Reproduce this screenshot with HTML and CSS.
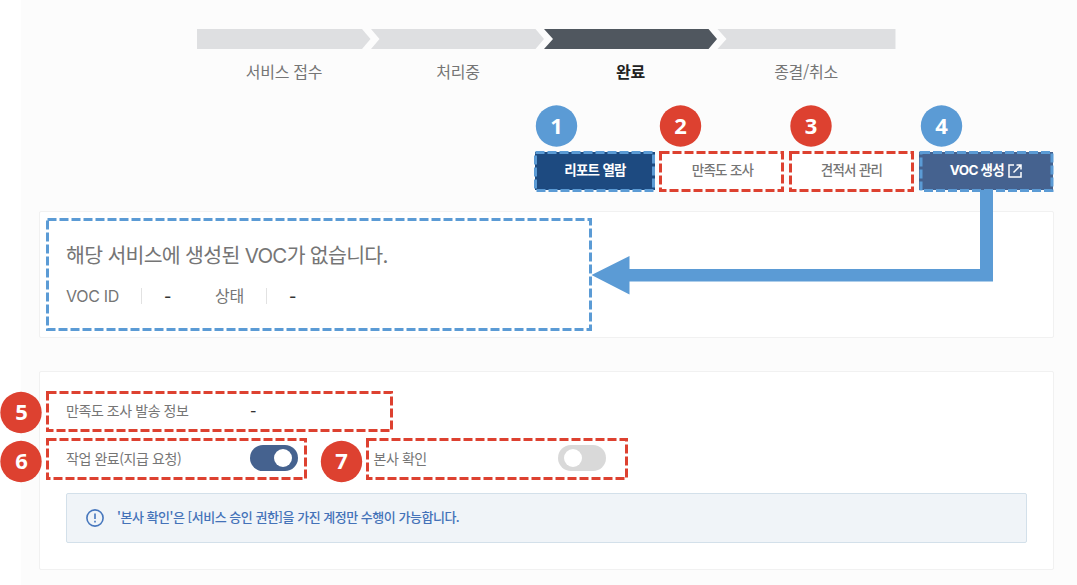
FILE: index.html
```
<!DOCTYPE html>
<html lang="ko">
<head>
<meta charset="utf-8">
<title>서비스 상세</title>
<link rel="stylesheet" href="styles.css">
</head>
<body>
<main class="page">
  <section class="progress">
    <svg class="progress-bar" viewBox="0 0 699 20" width="699" height="20">
      <path class="todo" d="M0 0H165L173.500 10L165 20H0Z"/>
      <path class="todo" d="M174 0H338.500L347 10L338.500 20H174L182.500 10Z"/>
      <path class="active" d="M347 0H511.500L520 10L511.500 20H347L356 10Z"/>
      <path class="todo" d="M520.500 0H698.500V20H520.500L529.500 10Z"/>
    </svg>
    <div class="steps">
      <span class="step">서비스 접수</span>
      <span class="step">처리중</span>
      <span class="step current">완료</span>
      <span class="step">종결/취소</span>
    </div>
  </section>

  <nav class="actions">
    <button class="btn primary">리포트 열람</button>
    <button class="btn">만족도 조사</button>
    <button class="btn">견적서 관리</button>
    <button class="btn voc">VOC 생성
      <svg width="14" height="14" viewBox="0 0 14 14"><path d="M6 1H1V13H13V8M8.500 1H13V5.500M13 1L5.500 8.500"/></svg>
    </button>
  </nav>

  <section class="card summary">
    <h1 class="title">해당 서비스에 생성된 VOC가 없습니다.</h1>
    <div class="meta">
      <span class="meta-label id">VOC ID</span><span class="meta-value">-</span>
      <span class="meta-label state">상태</span><span class="meta-value">-</span>
    </div>
  </section>

  <section class="card detail">
    <div class="row">
      <span class="label">만족도 조사 발송 정보</span><span class="value">-</span>
    </div>
    <div class="row">
      <span class="label request">작업 완료(지급 요청)</span><span class="toggle on"></span>
      <span class="label head">본사 확인</span><span class="toggle"></span>
    </div>
    <div class="notice">
      <svg width="18" height="18" viewBox="0 0 18 18"><circle cx="9" cy="9" r="8.100"/><path d="M9 4.500V10M9 11.800V13.500"/></svg>
      <span>'본사 확인'은 [서비스 승인 권한]을 가진 계정만 수행이 가능합니다.</span>
    </div>
  </section>

  <svg class="annotations" viewBox="0 0 1077 585" width="1077" height="585">
    <g class="frame blue">
      <rect x="535.500" y="152.500" width="118" height="38"/>
      <rect x="921" y="152.500" width="131" height="38"/>
      <rect x="47.500" y="219.500" width="543" height="110"/>
    </g>
    <g class="frame red">
      <rect x="660.500" y="152.500" width="122" height="38"/>
      <rect x="790.500" y="152.500" width="122" height="38"/>
      <rect x="47.500" y="392.500" width="344" height="38"/>
      <rect x="47.500" y="439.500" width="258" height="39"/>
      <rect x="367.500" y="439.500" width="259" height="39"/>
    </g>
    <path class="arrow" d="M980 190H993V281.500H629.500V294.500L591.500 275L629.500 256V269H980Z"/>
    <g class="badge blue">
      <circle cx="556.500" cy="126" r="20.700"/><text x="556.500" y="134">1</text>
      <circle cx="941.500" cy="126" r="20.700"/><text x="941.500" y="134">4</text>
    </g>
    <g class="badge red">
      <circle cx="680.500" cy="126" r="20.700"/><text x="680.500" y="134">2</text>
      <circle cx="811" cy="126" r="20.700"/><text x="811" y="134">3</text>
      <circle cx="21" cy="412.500" r="20.700"/><text x="21.500" y="420">5</text>
      <circle cx="21" cy="461.500" r="20.700"/><text x="21.500" y="469">6</text>
      <circle cx="341.500" cy="461.500" r="20.700"/><text x="341.500" y="469">7</text>
    </g>
  </svg>
</main>
</body>
</html>
```

FILE: styles.css
```
* { box-sizing: border-box; }
body {
  margin: 0;
  background: #fff;
  font-family: "Noto Sans CJK KR", "Noto Sans", sans-serif;
  color: #757575;
}
.page {
  position: relative;
  width: 1077px;
  height: 585px;
  overflow: hidden;
  padding: 29px 24px 0 39px;
  background: linear-gradient(to right, #fff 21px, #fcfcfc 21px);
}
.progress { width: 699px; margin-left: 158px; }
.progress-bar { display: block; }
.todo { fill: #dedfe1; }
.active { fill: #50575f; }
.steps {
  display: grid;
  grid-template-columns: repeat(4, 174px);
  height: 48px;
  line-height: 45px;
  text-align: center;
  font-size: 16px;
  letter-spacing: -0.3px;
}
.current { padding-right: 3px; color: #222; font-weight: 700; }
.actions {
  display: grid;
  grid-template-columns: 120px 123px 123px 134px;
  gap: 7px 6px;
  justify-content: end;
  margin-top: 55px;
}
.btn {
  height: 38px;
  padding: 0 0 4px;
  border: 0;
  background: #fff;
  color: #757575;
  font: 500 13.5px "Noto Sans CJK KR", sans-serif;
  letter-spacing: -0.7px;
}
.primary { background: #1d4a80; color: #fff; font-weight: 700; }
.voc {
  display: flex;
  align-items: center;
  justify-content: center;
  gap: 4px;
  background: #45628f;
  color: #fff;
  font-family: Inter, "Noto Sans CJK KR", sans-serif;
  font-weight: 700;
  letter-spacing: -0.6px;
}
.voc svg { fill: none; stroke: #fff; stroke-width: 1.5; margin-top: 4px; }
.card {
  width: 1014.5px;
  background: #fff;
  border: 1px solid #f1f1f1;
  border-radius: 2px;
}
.summary { height: 127px; margin-top: 21px; padding: 29px 26px 0; }
.title {
  margin: 0;
  line-height: 30px;
  font-family: Inter, "Noto Sans CJK KR", sans-serif;
  font-size: 20.5px;
  font-weight: 400;
  letter-spacing: -0.7px;
  color: #757575;
}
.meta {
  display: flex;
  align-items: center;
  height: 24px;
  margin-top: 13px;
  font-family: Inter, "Noto Sans CJK KR", sans-serif;
  font-size: 16px;
}
.meta-label { letter-spacing: -0.3px; border-right: 1px solid #e2e2e2; line-height: 16px; }
.id { width: 76px; }
.state { width: 52px; }
.meta-value { width: 73px; padding-left: 22px; color: #333; font-weight: 500; }
.detail { height: 199px; margin-top: 33px; padding: 17px 26px 0; }
.row { display: flex; align-items: center; height: 48px; font-size: 14px; }
.row:first-child { height: 42px; margin-bottom: 3px; }
.label { width: 184px; padding-bottom: 1px; letter-spacing: -0.43px; }
.value { color: #333; font-family: Inter, sans-serif; font-weight: 500; }
.head { margin-left: 75.5px; }
.toggle {
  display: flex;
  width: 48px;
  height: 26px;
  padding: 4px 6px;
  border-radius: 13px;
  background: #d9d9d9;
}
.toggle::before { content: ""; width: 18px; height: 18px; border-radius: 50%; background: #fff; }
.toggle.on { justify-content: flex-end; background: #45628f; }
.notice {
  display: flex;
  align-items: center;
  gap: 13px;
  width: 961px;
  height: 50px;
  margin-top: 11px;
  padding-left: 19px;
  border: 1px solid #d3e0ea;
  border-radius: 2px;
  background: #f0f4f8;
  color: #4472b8;
  font-size: 13px;
  font-weight: 500;
  letter-spacing: -0.48px;
}
.notice span { padding-bottom: 3px; }
.notice svg { fill: none; stroke: #4777bd; stroke-width: 1.6; }
.annotations { position: absolute; left: 0; top: 0; }
.frame { fill: none; stroke-width: 3; stroke-dasharray: 9 3; }
.frame.blue { stroke: #5b9bd5; }
.frame.red { stroke: #dd4130; }
.arrow, .badge.blue circle { fill: #5b9bd5; }
.badge.red circle { fill: #dd4130; }
.badge text { fill: #fff; font: 700 22px "Noto Sans", sans-serif; text-anchor: middle; }
```
